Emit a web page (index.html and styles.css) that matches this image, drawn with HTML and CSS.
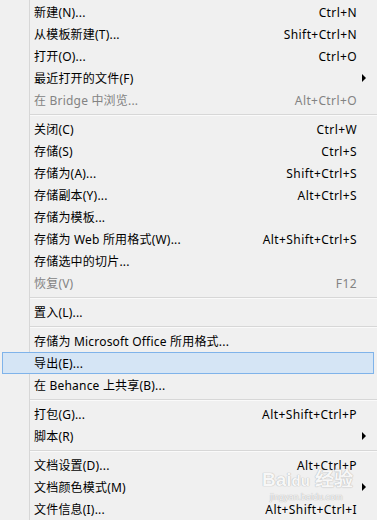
FILE: index.html
```html
<!DOCTYPE html>
<html lang="zh-CN">
<head>
    <meta charset="UTF-8">
    <meta name="viewport" content="width=device-width, initial-scale=1.0">
    <title>文件菜单</title>
    <link rel="stylesheet" href="styles.css">
</head>
<body>
    <div class="menu">
        <div class="item"><span class="label">新建(N)...</span><span class="key">Ctrl+N</span><span class="sub"></span></div>
        <div class="item"><span class="label">从模板新建(T)...</span><span class="key">Shift+Ctrl+N</span><span class="sub"></span></div>
        <div class="item"><span class="label">打开(O)...</span><span class="key">Ctrl+O</span><span class="sub"></span></div>
        <div class="item"><span class="label">最近打开的文件(F)</span><span class="key"></span><span class="sub"><i class="arrow"></i></span></div>
        <div class="item disabled"><span class="label">在 Bridge 中浏览...</span><span class="key">Alt+Ctrl+O</span><span class="sub"></span></div>
        <div class="sep"></div>
        <div class="item"><span class="label">关闭(C)</span><span class="key">Ctrl+W</span><span class="sub"></span></div>
        <div class="item"><span class="label">存储(S)</span><span class="key">Ctrl+S</span><span class="sub"></span></div>
        <div class="item"><span class="label">存储为(A)...</span><span class="key">Shift+Ctrl+S</span><span class="sub"></span></div>
        <div class="item"><span class="label">存储副本(Y)...</span><span class="key">Alt+Ctrl+S</span><span class="sub"></span></div>
        <div class="item"><span class="label">存储为模板...</span><span class="key"></span><span class="sub"></span></div>
        <div class="item"><span class="label">存储为 Web 所用格式(W)...</span><span class="key">Alt+Shift+Ctrl+S</span><span class="sub"></span></div>
        <div class="item"><span class="label">存储选中的切片...</span><span class="key"></span><span class="sub"></span></div>
        <div class="item disabled"><span class="label">恢复(V)</span><span class="key">F12</span><span class="sub"></span></div>
        <div class="sep"></div>
        <div class="item"><span class="label">置入(L)...</span><span class="key"></span><span class="sub"></span></div>
        <div class="sep"></div>
        <div class="item"><span class="label">存储为 Microsoft Office 所用格式...</span><span class="key"></span><span class="sub"></span></div>
        <div class="item active"><span class="label">导出(E)...</span><span class="key"></span><span class="sub"></span></div>
        <div class="item"><span class="label">在 Behance 上共享(B)...</span><span class="key"></span><span class="sub"></span></div>
        <div class="sep"></div>
        <div class="item"><span class="label">打包(G)...</span><span class="key">Alt+Shift+Ctrl+P</span><span class="sub"></span></div>
        <div class="item"><span class="label">脚本(R)</span><span class="key"></span><span class="sub"><i class="arrow"></i></span></div>
        <div class="sep"></div>
        <div class="item"><span class="label">文档设置(D)...</span><span class="key">Alt+Ctrl+P</span><span class="sub"></span></div>
        <div class="item"><span class="label">文档颜色模式(M)</span><span class="key"></span><span class="sub"><i class="arrow"></i></span></div>
        <div class="item"><span class="label">文件信息(I)...</span><span class="key">Alt+Shift+Ctrl+I</span><span class="sub"></span></div>

        <div class="watermark">
            <div class="wm-logo">Bai<span class="wm-paw">du</span> 经验</div>
            <div class="wm-url">jingyan.baidu.com</div>
        </div>
    </div>
</body>
</html>
```

FILE: styles.css
```css
html, body {
    margin: 0;
    padding: 0;
    background-color: #f0f0f0;
}
.menu {
    position: relative;
    width: 377px;
    height: 520px;
    padding-top: 1px;
    box-sizing: border-box;
    overflow: hidden;
    font-family: "Noto Sans", "Noto Sans CJK SC", sans-serif;
    font-size: 12px;
    color: #000;
    background: linear-gradient(to right, #f0f0f0 29px, #d7d7d7 29px, #d7d7d7 30px, #f0f0f0 30px);
}
.item {
    display: flex;
    align-items: center;
    height: 22px;
    margin: 0 3px 0 2px;
    padding-left: 31px;
    border: 1px solid transparent;
    box-sizing: border-box;
    white-space: nowrap;
}
.item .label {
    flex: 1;
    letter-spacing: 0.2px;
}
.item .key {
    text-align: right;
    letter-spacing: 0.4px;
}
.item .sub {
    width: 16px;
    display: flex;
    align-items: center;
}
.arrow {
    display: block;
    margin-left: 5px;
    width: 0;
    height: 0;
    border-top: 4px solid transparent;
    border-bottom: 4px solid transparent;
    border-left: 4px solid #000;
}
.item.disabled {
    color: #838383;
}
.item.active {
    background-color: #d5e5f5;
    border-color: #7fb3ea;
}
.sep {
    height: 7px;
    margin-left: 30px;
    position: relative;
}
.sep::after {
    content: "";
    display: block;
    position: absolute;
    left: 0;
    right: 0;
    top: 3px;
    height: 1px;
    background-color: #d7d7d7;
    border-bottom: 1px solid #fafafa;
}

/* watermark */
.watermark {
    position: absolute;
    left: 262px;
    top: 469px;
    color: #f7f7f7;
    text-shadow: 0 0 1px #b8b8b8, 0 0 1px #b8b8b8;
    pointer-events: none;
}
.wm-logo {
    font-family: "Liberation Sans", sans-serif;
    font-size: 19px;
    font-weight: bold;
    line-height: 22px;
}
.wm-paw {
    font-size: 15px;
}
.wm-url {
    font-family: "Liberation Sans", sans-serif;
    font-size: 9px;
    line-height: 10px;
    margin-left: 8px;
}
```
